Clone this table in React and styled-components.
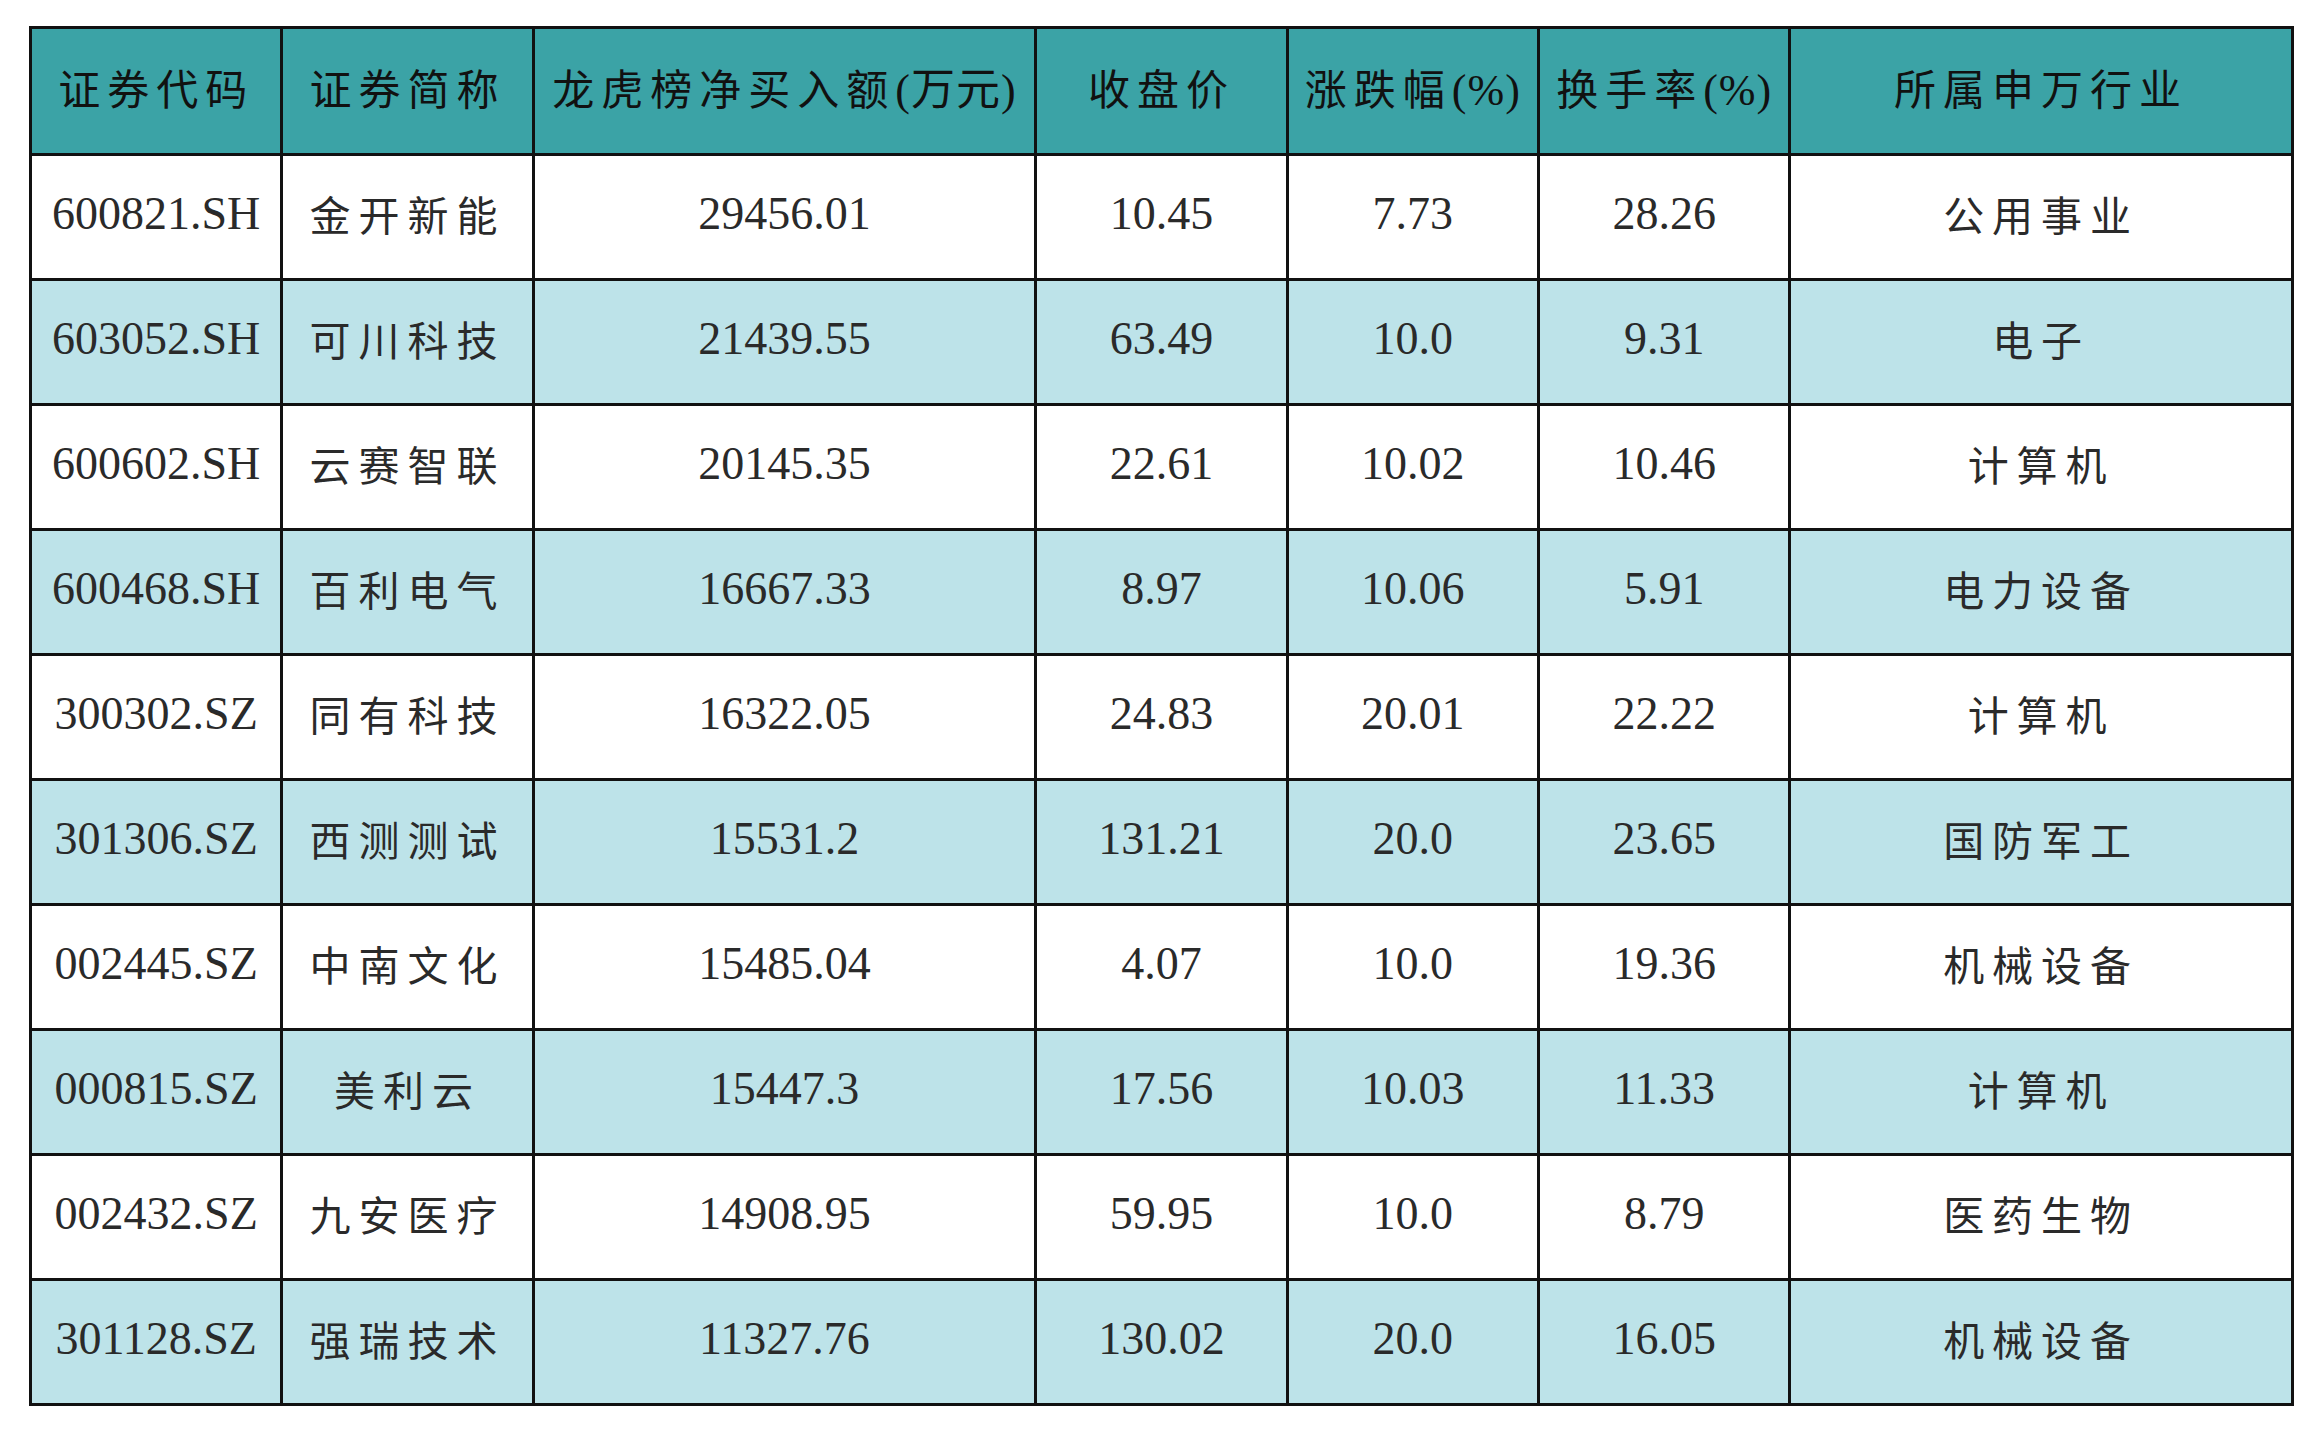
import React from "react";
import styled, { createGlobalStyle } from "styled-components";

const GlobalStyle = createGlobalStyle`
  html, body {
    margin: 0;
    padding: 0;
    background: #ffffff;
  }
`;

const Page = styled.div`
  width: 2319px;
  height: 1434px;
  padding: 26px 0 0 29px;
  box-sizing: border-box;
  background: #ffffff;
`;

const Table = styled.table`
  border-collapse: collapse;
  table-layout: fixed;
  width: 2262px;
  font-family: "Liberation Serif", "Noto Sans CJK SC", serif;
  color: #2a2a2a;
`;

const HeadCell = styled.th`
  height: 114px;
  border: 3px solid #111;
  background: #3ba3a6;
  color: #111;
  font-weight: normal;
  font-size: 42px;
  letter-spacing: 7px;
  text-align: center;
  vertical-align: middle;
  padding: 0 0 10px;
  white-space: nowrap;
`;

const Paren = styled.span`
  letter-spacing: 1px;
  font-size: 44px;
`;

const Cell = styled.td`
  height: 114px;
  border: 3px solid #111;
  background: ${(p) => (p.$alt ? "#bde3e9" : "#ffffff")};
  font-size: ${(p) => (p.$cjk ? "41px" : "46px")};
  letter-spacing: ${(p) => (p.$cjk ? "8px" : "0")};
  text-align: center;
  vertical-align: middle;
  padding: 0 0 8px;
  white-space: nowrap;
`;

const columns = [
  { title: "证券代码", w: 1 },
  { title: "证券简称", w: 1 },
  { title: "龙虎榜净买入额", unit: "(万元)", w: 2 },
  { title: "收盘价", w: 1 },
  { title: "涨跌幅", unit: "(%)", w: 1 },
  { title: "换手率", unit: "(%)", w: 1 },
  { title: "所属申万行业", w: 2 },
];

const rows = [
  ["600821.SH", "金开新能", "29456.01", "10.45", "7.73", "28.26", "公用事业"],
  ["603052.SH", "可川科技", "21439.55", "63.49", "10.0", "9.31", "电子"],
  ["600602.SH", "云赛智联", "20145.35", "22.61", "10.02", "10.46", "计算机"],
  ["600468.SH", "百利电气", "16667.33", "8.97", "10.06", "5.91", "电力设备"],
  ["300302.SZ", "同有科技", "16322.05", "24.83", "20.01", "22.22", "计算机"],
  ["301306.SZ", "西测测试", "15531.2", "131.21", "20.0", "23.65", "国防军工"],
  ["002445.SZ", "中南文化", "15485.04", "4.07", "10.0", "19.36", "机械设备"],
  ["000815.SZ", "美利云", "15447.3", "17.56", "10.03", "11.33", "计算机"],
  ["002432.SZ", "九安医疗", "14908.95", "59.95", "10.0", "8.79", "医药生物"],
  ["301128.SZ", "强瑞技术", "11327.76", "130.02", "20.0", "16.05", "机械设备"],
];

const cjkCols = [1, 6];

export default function App() {
  const unit = 2262 / 9;
  return (
    <Page>
      <GlobalStyle />
      <Table>
        <colgroup>
          {columns.map((c) => (
            <col key={c.title} style={{ width: `${unit * c.w}px` }} />
          ))}
        </colgroup>
        <thead>
          <tr>
            {columns.map((c) => (
              <HeadCell key={c.title}>
                {c.title}
                {c.unit && <Paren>{c.unit}</Paren>}
              </HeadCell>
            ))}
          </tr>
        </thead>
        <tbody>
          {rows.map((r, i) => (
            <tr key={r[0]}>
              {r.map((v, j) => (
                <Cell key={j} $alt={i % 2 === 1} $cjk={cjkCols.includes(j)}>
                  {v}
                </Cell>
              ))}
            </tr>
          ))}
        </tbody>
      </Table>
    </Page>
  );
}
